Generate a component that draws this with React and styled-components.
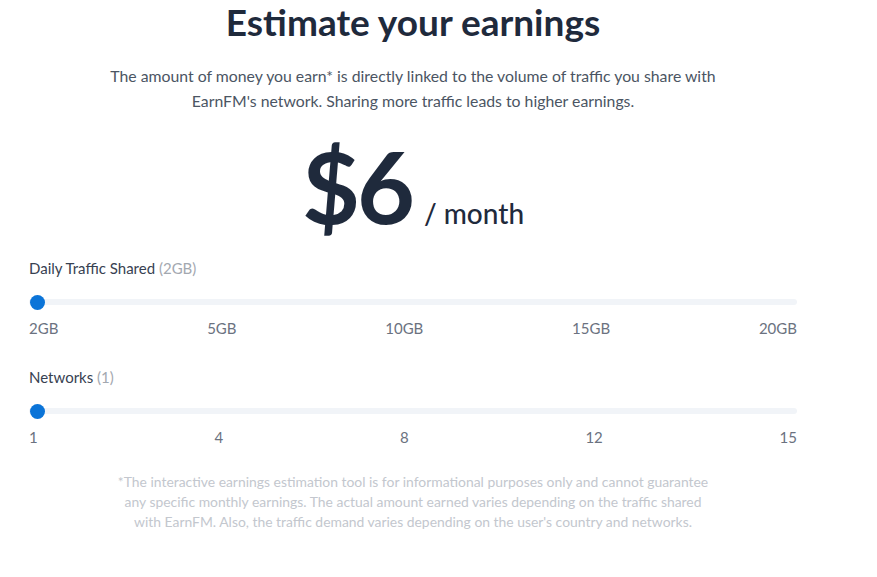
import React, { useState } from "react";
import styled, { createGlobalStyle } from "styled-components";

const GlobalStyle = createGlobalStyle`
  html, body {
    margin: 0;
    padding: 0;
    background: #ffffff;
  }
  body {
    font-family: "Lato", "Noto Sans", sans-serif;
    color: #1f2a3c;
  }
`;

const trafficSteps = ["2GB", "5GB", "10GB", "15GB", "20GB"];
const networkSteps = ["1", "4", "8", "12", "15"];

const App = () => {
  const [traffic] = useState(2);
  const [networks] = useState(1);

  return (
    <>
      <GlobalStyle />
      <Page>
        <Title>Estimate your earnings</Title>
        <Lead>
          The amount of money you earn* is directly linked to the volume of
          traffic you share with
          <br />
          EarnFM's network. Sharing more traffic leads to higher earnings.
        </Lead>
        <Price>
          <Amount>$6</Amount>
          <Period>/ month</Period>
        </Price>

        <Slider label="Daily Traffic Shared" value={`${traffic}GB`} steps={trafficSteps} />
        <Slider label="Networks" value={networks} steps={networkSteps} />

        <Note>
          *The interactive earnings estimation tool is for informational
          purposes only and cannot guarantee
          <br />
          any specific monthly earnings. The actual amount earned varies
          depending on the traffic shared
          <br />
          with EarnFM. Also, the traffic demand varies depending on the user's
          country and networks.
        </Note>
      </Page>
    </>
  );
};

const Slider = ({ label, value, steps }) => (
  <Field>
    <Label>
      {label} <Muted>({value})</Muted>
    </Label>
    <Track>
      <Thumb />
    </Track>
    <Ticks>
      {steps.map((s) => (
        <span key={s}>{s}</span>
      ))}
    </Ticks>
  </Field>
);

const Page = styled.div`
  width: 768px;
  margin-left: 29px;
  padding-top: 2px;
  display: flex;
  flex-direction: column;
`;

const Title = styled.h1`
  margin: 0;
  text-align: center;
  font-size: 37px;
  line-height: 40px;
  font-weight: 700;
  color: #1f2a3c;
`;

const Lead = styled.p`
  margin: 21px 0 0;
  text-align: center;
  font-size: 15.8px;
  line-height: 25px;
  color: #4b5563;
`;

const Price = styled.div`
  display: flex;
  align-items: baseline;
  justify-content: center;
  margin-top: 17px;
  height: 110px;
`;

const Amount = styled.span`
  font-size: 100px;
  line-height: 110px;
  font-weight: 700;
  letter-spacing: -3px;
  color: #1f2a3c;
`;

const Period = styled.span`
  margin-left: 12px;
  font-size: 28px;
  font-weight: 500;
  color: #1f2a3c;
`;

const Field = styled.div`
  display: flex;
  flex-direction: column;
  margin-top: 18px;
  & + & {
    margin-top: 29px;
  }
`;

const Label = styled.div`
  font-size: 15px;
  line-height: 20px;
  color: #374151;
`;

const Muted = styled.span`
  color: #a3a8b0;
`;

const Track = styled.div`
  position: relative;
  margin-top: 21px;
  height: 6px;
  border-radius: 3px;
  background: #f1f4f8;
`;

const Thumb = styled.div`
  position: absolute;
  left: 1px;
  top: 50%;
  width: 15px;
  height: 15px;
  margin-top: -7.5px;
  border-radius: 50%;
  background: #0b74d8;
`;

const Ticks = styled.div`
  display: flex;
  justify-content: space-between;
  margin-top: 13px;
  font-size: 15px;
  line-height: 20px;
  color: #6b7280;
`;

const Note = styled.p`
  margin: 25px 0 0;
  text-align: center;
  font-size: 13.9px;
  line-height: 20px;
  color: #c3c7ce;
`;

export default App;
